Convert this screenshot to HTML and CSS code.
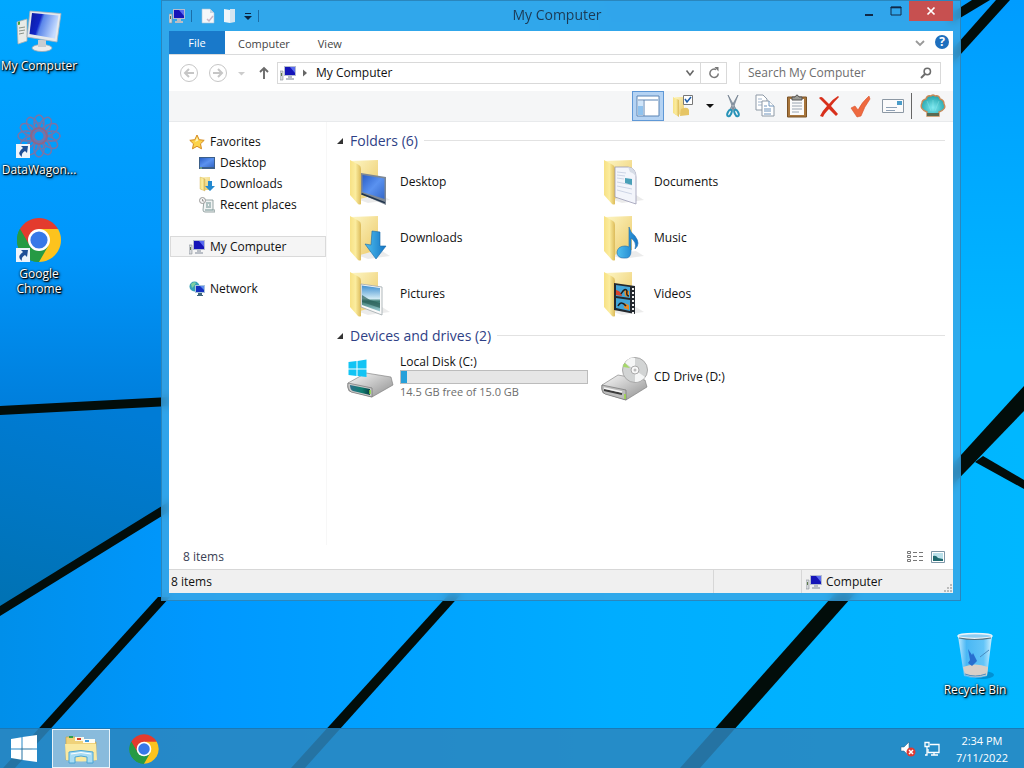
FILE: index.html
```html
<!DOCTYPE html>
<html lang="en">
<head>
    <meta charset="UTF-8">
    <meta name="viewport" content="width=device-width, initial-scale=1.0">
    <title>My Computer</title>
    <link rel="stylesheet" href="styles.css">
</head>
<body>
    <!-- shared icons -->
    <svg class="defs" width="0" height="0" aria-hidden="true">
        <defs>
            <linearGradient id="screen" x1="0" y1="0" x2="1" y2=".3">
                <stop offset="0" stop-color="#0a1a9c"/>
                <stop offset=".4" stop-color="#1026c8"/>
                <stop offset=".5" stop-color="#5a86ea"/>
                <stop offset="1" stop-color="#c5dcff"/>
            </linearGradient>
            <linearGradient id="back" x1="0" y1="0" x2="1" y2="1">
                <stop offset="0" stop-color="#fdf6c4"/>
                <stop offset="1" stop-color="#ecc968"/>
            </linearGradient>
            <linearGradient id="flap" x1="0" y1="0" x2="1" y2="0">
                <stop offset="0" stop-color="#f7e184"/>
                <stop offset=".5" stop-color="#fbec9e"/>
                <stop offset="1" stop-color="#dcbb5a"/>
            </linearGradient>
            <linearGradient id="blue" x1="0" y1="0" x2="1" y2="1">
                <stop offset="0" stop-color="#2a5fc8"/>
                <stop offset=".5" stop-color="#5a92f0"/>
                <stop offset="1" stop-color="#3568c8"/>
            </linearGradient>
            <linearGradient id="arrow" x1="0" y1="0" x2="1" y2="0">
                <stop offset="0" stop-color="#4fc0f0"/>
                <stop offset="1" stop-color="#1474c4"/>
            </linearGradient>
            <linearGradient id="metal" x1="0" y1="0" x2="1" y2="1">
                <stop offset="0" stop-color="#fafafa"/>
                <stop offset="1" stop-color="#8e8e8e"/>
            </linearGradient>
            <linearGradient id="sky" x1="0" y1="0" x2="0" y2="1">
                <stop offset="0" stop-color="#3f8fd0"/>
                <stop offset=".5" stop-color="#cfe9f4"/>
                <stop offset=".6" stop-color="#3b7a70"/>
                <stop offset="1" stop-color="#9fd0d8"/>
            </linearGradient>
            <linearGradient id="glass" x1="0" y1="0" x2="1" y2="0">
                <stop offset="0" stop-color="#d9f1ff" stop-opacity=".9"/>
                <stop offset=".25" stop-color="#5cb8f2" stop-opacity=".8"/>
                <stop offset=".75" stop-color="#7cc8f6" stop-opacity=".8"/>
                <stop offset="1" stop-color="#e6f6ff" stop-opacity=".9"/>
            </linearGradient>
            <linearGradient id="deep" x1="0" y1="0" x2="1" y2="0">
                <stop offset="0" stop-color="#2f6f8a"/>
                <stop offset=".6" stop-color="#0e7e70"/>
                <stop offset="1" stop-color="#0a3e46"/>
            </linearGradient>
            <radialGradient id="shell" cx=".5" cy=".6" r=".6">
                <stop offset="0" stop-color="#7be8f0"/>
                <stop offset="1" stop-color="#1fa0a8"/>
            </radialGradient>
        </defs>
        <symbol id="pc" viewBox="0 0 16 16">
            <path d="M0 6h3v9H0z" fill="#d5d8dc" stroke="#8a9098" stroke-width=".6"/>
            <path d="M1 8h1v3H1z" fill="#5d7a4a"/>
            <path d="M4 1h12v10H4z" fill="#b4bcd0"/>
            <path d="M5 2h10v8H5z" fill="#1515b8"/>
            <path d="M10 2h5v6z" fill="#5a6cf0"/>
            <path d="M8 11h4v2h2v2H6v-2h2z" fill="#b9bec6"/>
        </symbol>
        <symbol id="folder" viewBox="0 0 48 48">
            <path d="M8 40l14 5 22-3-8-5z" fill="#000" opacity=".08"/>
            <path d="M5 3l27-1v34l-18 5z" fill="url(#back)"/>
            <path d="M4 2l9 5q2 1 2 4v35q-1 1-3 0l-8-9z" fill="url(#flap)"/>
        </symbol>
        <symbol id="chrome" viewBox="0 0 48 48">
            <path d="M24 24L4.950 13A22 22 0 0 1 43.050 13z" fill="#e33b2e"/>
            <path d="M24 24L4.950 13A22 22 0 0 0 24 46z" fill="#269a44"/>
            <path d="M24 24L43.050 13A22 22 0 0 1 24 46z" fill="#fcc31e"/>
            <path d="M24 13h19.050L33.500 29.500z" fill="#fcc31e"/>
            <path d="M14.500 29.500L4.950 13 24 13z" fill="#e33b2e"/>
            <path d="M4.950 13l9.550 16.500L24 35l9.500-5.500L24 46A22 22 0 0 1 4.950 13z" fill="#269a44"/>
            <circle cx="24" cy="24" r="11" fill="#fff"/>
            <circle cx="24" cy="24" r="8.600" fill="#3778e8"/>
        </symbol>
        <symbol id="shortcut" viewBox="0 0 14 14">
            <path d="M0 0h14v14H0z" fill="#eef4fb"/>
            <path d="M5 2l7 0-1 7-2-2q-4 2-3 6-6-4 1-9z" fill="#1f4f96"/>
        </symbol>
    </svg>

    <main class="desktop">
        <svg class="wallpaper" viewBox="0 0 1024 768" preserveAspectRatio="none" aria-hidden="true">
            <defs>
                <linearGradient id="top" x1="0" y1="0" x2="0" y2="1">
                    <stop offset="0" stop-color="#00a8ff"/>
                    <stop offset=".6" stop-color="#0097fc"/>
                    <stop offset="1" stop-color="#007edb"/>
                </linearGradient>
                <linearGradient id="low" x1="0" y1="0" x2="1" y2="0">
                    <stop offset="0" stop-color="#008fea"/>
                    <stop offset=".2" stop-color="#0098ff"/>
                    <stop offset=".6" stop-color="#00adff"/>
                    <stop offset="1" stop-color="#00b7ff"/>
                </linearGradient>
                <linearGradient id="dark" x1=".5" y1="0" x2=".3" y2="1">
                    <stop offset="0" stop-color="#007cd6"/>
                    <stop offset="1" stop-color="#0072b4"/>
                </linearGradient>
                <linearGradient id="side" x1="0" y1="0" x2="0" y2="1">
                    <stop offset="0" stop-color="#009cff"/>
                    <stop offset=".8" stop-color="#00b7ff"/>
                </linearGradient>
            </defs>
            <path d="M0 0h1024v768H0z" fill="url(#low)"/>
            <path d="M0 0h600v370L0 410z" fill="url(#top)"/>
            <path d="M0 410l161-9v110L0 611z" fill="url(#dark)"/>
            <path d="M600 0h424v440H600z" fill="url(#side)"/>
            <g fill="#020d0a">
                <path d="M0 406l170-9v9L0 415z"/>
                <path d="M0 606l170-105v10L0 616z"/>
                <path d="M158 597h12L15 768H3z"/>
                <path d="M450 593h12L305 768h-14z"/>
                <path d="M838 590h20L700 768h-20z"/>
                <path d="M1024 386v25L940 498v-20z"/>
                <path d="M983 456l41 24v9l-49-27z"/>
                <path d="M950 14l22-14h18L950 24z"/>
                <path d="M996 0h14L950 66V52z"/>
            </g>
        </svg>

        <nav class="shortcuts" aria-label="Desktop">
            <a class="shortcut" href="#">
                <svg width="48" height="48" viewBox="0 0 48 48">
                    <path d="M2 14l10-3v22L3 36z" fill="#e8ebe8" stroke="#a8b0b0" stroke-width=".8"/>
                    <path d="M4 20l6-1M4 23l6-1M4 26l5-1" stroke="#8a948a"/>
                    <path d="M3 14l2-.6v3l-2 .6z" fill="#4aa23a"/>
                    <ellipse cx="27" cy="40" rx="10" ry="3.500" fill="#ececec" stroke="#a0a8b0" stroke-width=".8"/>
                    <path d="M23 32h8v7h-8z" fill="#c8ccd0"/>
                    <path d="M15 3l31 2.500-4 28.500-30-5z" fill="#e4e9ed" stroke="#a6b0ba" stroke-width=".8"/>
                    <path d="M17 5l26.500 2.500-3.500 23-25.500-4.500z" fill="url(#screen)"/>
                </svg>
                <span>My Computer</span>
            </a>
            <a class="shortcut" href="#">
                <svg width="48" height="48" viewBox="0 0 48 48">
                    <g fill="none" stroke="#86709e" stroke-width="1.500" opacity=".9">
                        <g id="petals">
                            <ellipse cx="24" cy="11" rx="5" ry="8"/><ellipse cx="24" cy="37" rx="5" ry="8"/>
                            <ellipse cx="11" cy="24" rx="8" ry="5"/><ellipse cx="37" cy="24" rx="8" ry="5"/>
                        </g>
                        <use href="#petals" transform="rotate(30 24 24)"/>
                        <use href="#petals" transform="rotate(60 24 24)"/>
                        <circle cx="24" cy="24" r="13" stroke-dasharray="2 2"/>
                        <circle cx="24" cy="24" r="8" stroke="#a0607c" stroke-width="2"/>
                    </g>
                    <use href="#shortcut" x="1" y="32" width="14" height="14"/>
                </svg>
                <span>DataWagon...</span>
            </a>
            <a class="shortcut" href="#">
                <svg width="48" height="48" viewBox="0 0 48 48">
                    <use href="#chrome" width="48" height="48"/>
                    <use href="#shortcut" x="1" y="32" width="14" height="14"/>
                </svg>
                <span>Google Chrome</span>
            </a>
        </nav>

        <a class="shortcut recycle" href="#">
            <svg width="48" height="48" viewBox="0 0 48 48">
                <ellipse cx="31" cy="43" rx="12" ry="4" fill="#004a80" opacity=".35"/>
                <path d="M7 4h34l-5 40q-12 4-23 0z" fill="url(#glass)"/>
                <path d="M12 35q12-5 25 0l-1 8q-11 4-22 0z" fill="#d8cfc8"/>
                <path d="M17 17l4 6 1-2 4 8-5 5-4-3 2-3z" fill="#2060c8" opacity=".85"/>
                <path d="M29 25l9-7M14 42q10 4 21 0" fill="none" stroke="#4a8cc0"/>
                <ellipse cx="24" cy="4" rx="17" ry="2.500" fill="#8fcdf2" stroke="#eaf4fa" stroke-width="1.500"/>
                <path d="M8 6q15 3 32 0" fill="none" stroke="#56707e" stroke-width="1.200"/>
            </svg>
            <span>Recycle Bin</span>
        </a>

        <section class="window">
            <header class="titlebar">
                <div class="quick">
                    <svg width="16" height="16"><use href="#pc"/></svg>
                    <i class="bar"></i>
                    <svg class="gap" width="16" height="16" viewBox="0 0 16 16"><path d="M2 1h8l4 4v10H2z" fill="#f4f7fa" stroke="#a9c4d8" stroke-width=".6"/><path d="M10 1v4h4" fill="#c8d4e0"/><path d="M7 11l2 2 4-5" fill="none" stroke="#c9b5c5" stroke-width="1.500"/></svg>
                    <svg width="16" height="16" viewBox="0 0 16 16"><path d="M2 1l6 1v13l-6-1z" fill="#eef5fa"/><path d="M8 1h5v13l-5 1z" fill="#d3e5f1"/></svg>
                    <svg width="8" height="10" viewBox="0 0 8 10"><path d="M1 2.500h6" stroke="#0b2440"/><path d="M0 5h8L4 9z" fill="#0b2440"/></svg>
                    <i class="bar"></i>
                </div>
                <h1 class="title">My Computer</h1>
                <div class="controls">
                    <button aria-label="Minimize"><svg width="12" height="12" viewBox="0 0 12 12"><path d="M2 9h8v2H2z" fill="#102a48"/></svg></button>
                    <button aria-label="Maximize"><svg width="12" height="12" viewBox="0 0 12 12"><path d="M1 2h10v8H1z" fill="none" stroke="#102a48"/><path d="M1 2h10v1H1z" fill="#102a48" stroke="#102a48" stroke-width=".6"/></svg></button>
                    <button class="close" aria-label="Close"><svg width="10" height="10" viewBox="0 0 10 10"><path d="M1.500 1.500l7 7M8.500 1.500l-7 7" stroke="#fff" stroke-width="1.700"/></svg></button>
                </div>
            </header>

            <div class="client">
                <div class="tabs">
                    <button class="tab file">File</button>
                    <button class="tab">Computer</button>
                    <button class="tab">View</button>
                    <button class="plain push" aria-label="Expand the ribbon"><svg width="10" height="8" viewBox="0 0 10 8"><path d="M1 2l4 4 4-4" fill="none" stroke="#999" stroke-width="1.800"/></svg></button>
                    <button class="help" aria-label="Help">?</button>
                </div>

                <div class="address-row">
                    <button class="plain" aria-label="Back"><svg width="20" height="20" viewBox="0 0 20 20"><g fill="none" stroke="#c6c6c6"><circle cx="10" cy="10" r="8.500"/><path d="M15 10H6M10 6l-4 4 4 4" stroke-width="2"/></g></svg></button>
                    <button class="plain" aria-label="Forward"><svg width="20" height="20" viewBox="0 0 20 20"><g fill="none" stroke="#c6c6c6"><circle cx="10" cy="10" r="8.500"/><path d="M5 10h9M10 6l4 4-4 4" stroke-width="2"/></g></svg></button>
                    <button class="plain" aria-label="Recent locations"><svg width="10" height="10" viewBox="0 0 10 10"><path d="M1 4h7l-3.500 3.500z" fill="#ccc"/></svg></button>
                    <button class="plain up" aria-label="Up"><svg width="12" height="14" viewBox="0 0 12 14"><path d="M6 13V3M2 6l4-4 4 4" fill="none" stroke="#6b6b6b" stroke-width="1.900"/></svg></button>
                    <div class="address">
                        <svg width="16" height="16"><use href="#pc"/></svg>
                        <svg width="8" height="10" viewBox="0 0 8 10"><path d="M2 1.500v7L6 5z" fill="#666"/></svg>
                        <span class="path">My Computer</span>
                        <button class="plain" aria-label="Previous locations"><svg width="10" height="8" viewBox="0 0 10 8"><path d="M1.500 1.500L5 6l3.500-4.500" fill="none" stroke="#666" stroke-width="1.600"/></svg></button>
                        <button class="plain refresh" aria-label="Refresh"><svg width="12" height="12" viewBox="0 0 12 12"><path d="M8 2.500a4.200 4.200 0 1 0 2.300 4" fill="none" stroke="#777" stroke-width="1.500"/><path d="M6.500 0h4v4.500z" fill="#777"/></svg></button>
                    </div>
                    <label class="search">
                        <input type="text" placeholder="Search My Computer" aria-label="Search My Computer">
                        <svg width="12" height="12" viewBox="0 0 12 12"><circle cx="7.300" cy="4.500" r="3.200" fill="none" stroke="#6b6b6b" stroke-width="1.500"/><path d="M5 7l-4 4" stroke="#6b6b6b" stroke-width="2"/></svg>
                    </label>
                </div>

                <div class="toolbar">
                    <button class="tool on" aria-label="Navigation pane"><svg width="24" height="24" viewBox="0 0 24 24"><path d="M1 2h22v20H1z" fill="#fff" stroke="#5a84b4"/><path d="M2 6h20M8 6v16" stroke="#5a84b4"/><path d="M2 7h5v14H2z" fill="#8fc2ee"/><path d="M2 7h5v5H2z" fill="#cfe5fa"/></svg></button>
                    <button class="tool wide" aria-label="Folder options"><svg width="24" height="24" viewBox="0 0 24 24"><path d="M4 3h9v17l-9 1z" fill="url(#back)"/><path d="M2 3l6 3v17l-6-4z" fill="url(#flap)"/><path d="M10 15q7-3 8 1v5l-9 1z" fill="#e6c565"/><path d="M12.500 1.500h9v9h-9z" fill="#fff" stroke="#777"/><path d="M14 5l2 3 4-5" fill="none" stroke="#1f5ca8" stroke-width="1.500"/></svg></button>
                    <button class="tool drop" aria-label="More options"><svg width="8" height="6" viewBox="0 0 8 6"><path d="M0 1h8L4 5z" fill="#111"/></svg></button>
                    <button class="tool" aria-label="Cut"><svg width="24" height="24" viewBox="0 0 24 24"><path d="M7 1l8 14-2 2zM17 1L9 15l2 2z" fill="#98a6b4" stroke="#5f6f80" stroke-width=".6"/><ellipse cx="8.500" cy="19" rx="1.800" ry="3.500" fill="none" stroke="#2793b8" stroke-width="2" transform="rotate(25 8.500 19)"/><ellipse cx="15.500" cy="19" rx="1.800" ry="3.500" fill="none" stroke="#2793b8" stroke-width="2" transform="rotate(-25 15.500 19)"/></svg></button>
                    <button class="tool" aria-label="Copy"><svg width="24" height="24" viewBox="0 0 24 24"><g fill="#fff" stroke="#8d99a6"><path d="M3 1h7l4 4v11H3z"/><path d="M5 5h4M5 8h6M5 11h4" stroke="#9fb4cc"/><path d="M9 7h7l5 5v10H9z"/><path d="M16 7v5h5M11 12h3M11 15h7M11 17h7M11 20h7" stroke="#6f94bc"/></g></svg></button>
                    <button class="tool" aria-label="Paste"><svg width="24" height="24" viewBox="0 0 24 24"><path d="M2.500 3h19v20h-19z" fill="#a8763c" stroke="#7a5226"/><path d="M5 5h14v16H5z" fill="#fbfbfb"/><path d="M7 9h10M7 12h10M7 15h10M7 18h7" stroke="#9aa4b0"/><path d="M7 3h3q2-4 4 0h3v3H7z" fill="#9a9a94" stroke="#555"/></svg></button>
                    <button class="tool" aria-label="Delete"><svg width="24" height="24" viewBox="0 0 24 24"><path d="M2 4q2-2 4 0l6 6q4-5 9-8l1 1q-5 5-8 9l7 8-2 2-7-7q-5 5-6 8l-3-1q3-6 7-10z" fill="#d8301c"/></svg></button>
                    <button class="tool" aria-label="Properties"><svg width="24" height="24" viewBox="0 0 24 24"><path d="M2 14l4-2 3 4q4-8 11-14l1 3q-6 8-9 17l-4 1z" fill="#ee6a40" stroke="#d8532c" stroke-width=".6"/></svg></button>
                    <button class="tool" aria-label="Rename"><svg width="24" height="24" viewBox="0 0 24 24"><path d="M1.500 5.500h21v13h-21z" fill="#fbfbfb" stroke="#8c98a4"/><path d="M16 7h5v4h-5z" fill="#4b9cc8"/><path d="M5 13.500h11M5 16.500h9" stroke="#8ea0b4"/></svg></button>
                    <i class="divider"></i>
                    <button class="tool" aria-label="Classic Explorer settings"><svg width="26" height="24" viewBox="0 0 26 24"><path d="M7 18q-8-3-5-9 0-3 4-4 1-4 5-3 2-2 4 0 4-1 5 3 4 1 4 5 3 5-5 8v4H7z" fill="url(#shell)" stroke="#c78a58" stroke-width="1.400"/><path d="M11 17L7 7M15 17l4-10M13 17V6" stroke="#a6f0f0" stroke-width=".8" opacity=".4"/><path d="M7 19h12v3H7z" fill="#5a6a52"/></svg></button>
                </div>

                <div class="panes">
                    <nav class="tree" aria-label="Navigation">
                        <a href="#"><svg width="16" height="16" viewBox="0 0 16 16"><path d="M8 1l2.200 4.700 5 .6-3.700 3.500 1 5L8 12.300l-4.500 2.500 1-5L.8 6.300l5-.6z" fill="#fcd34a" stroke="#d58a20" stroke-linejoin="round"/><path d="M8 3l1.300 3.500L6 8z" fill="#fff4b8"/></svg>Favorites</a>
                        <a class="sub" href="#"><svg width="16" height="16" viewBox="0 0 16 16"><path d="M0 2h16v12H0z" fill="#3c5f88"/><path d="M1 3h14v9H1z" fill="url(#blue)"/><path d="M1 13h2" stroke="#8fd08a"/></svg>Desktop</a>
                        <a class="sub" href="#"><svg width="16" height="16" viewBox="0 0 16 16"><path d="M2 1h9v13H2z" fill="url(#back)"/><path d="M1 1l5 2v12l-5-2z" fill="url(#flap)" stroke="#cfae50" stroke-width=".4"/><path d="M9 5h4v5h3l-5 5-5-5h3z" fill="#2489d0"/></svg>Downloads</a>
                        <a class="sub" href="#"><svg width="16" height="16" viewBox="0 0 16 16"><path d="M5 3h9v10h2v2H6q-2 0-2-2z" fill="#f0f3f3" stroke="#7f9090" stroke-width=".8"/><path d="M7 6h5M7 8h2M10 8h2M7 10h5M6 13h8" stroke="#6f9090"/><circle cx="3.500" cy="3.500" r="3" fill="#f4f4f4" stroke="#999"/><path d="M3.500 2v2H5" fill="none" stroke="#777" stroke-width=".7"/></svg>Recent places</a>
                        <a class="group selected" href="#"><svg width="16" height="16"><use href="#pc"/></svg>My Computer</a>
                        <a class="group" href="#"><svg width="16" height="16" viewBox="0 0 16 16"><circle cx="5.500" cy="5.500" r="5" fill="#38a0b8"/><path d="M2 3q3-3 5-1L5 5 3 7z" fill="#7fd0a0"/><path d="M6 4h10v8H6z" fill="#a9c4dc"/><path d="M7 5h8v6H7z" fill="#1530c0"/><path d="M11 5h4v4z" fill="#5f8cf0"/><path d="M9 12h4v2h1v1H8v-1h1z" fill="#40667c"/></svg>Network</a>
                    </nav>

                    <div class="files">
                        <h2><svg width="8" height="8" viewBox="0 0 8 8"><path d="M7 1v6H1z" fill="#333"/></svg>Folders (6)</h2>
                        <div class="tiles">
                            <a class="tile" href="#"><svg width="48" height="48" viewBox="0 0 48 48"><use href="#folder"/><path d="M15 15l25 4v28l-25-11z" fill="#7e8894"/><path d="M16.500 17l22 3.500V41l-22-7z" fill="url(#blue)"/><path d="M16 35l23 9v1.500l-24-9z" fill="#20344c"/></svg>Desktop</a>
                            <a class="tile" href="#"><svg width="48" height="48" viewBox="0 0 48 48"><use href="#folder"/><path d="M15 9h13q8 1 8 10v27l-21-7z" fill="#f3f5fb" stroke="#9a9ab4" stroke-width=".8"/><path d="M28 9q8 1 8 10-2-4-6-5z" fill="#d6dce6"/><path d="M17 14l9 1M17 17l8 1M17 20l7 1M17 24l15 3M17 28l15 3M17 32l15 4" stroke="#c3cbdf" stroke-width=".8"/><path d="M25 20l7 1v6l-7-2z" fill="#4aa0b8"/></svg>Documents</a>
                            <a class="tile" href="#"><svg width="48" height="48" viewBox="0 0 48 48"><use href="#folder"/><path d="M26 17l8 1v14l6 0-10 13-11-15 6 1z" fill="url(#arrow)" stroke="#1868a8" stroke-width=".6"/></svg>Downloads</a>
                            <a class="tile" href="#"><svg width="48" height="48" viewBox="0 0 48 48"><use href="#folder"/><path d="M29 13q1 5 6 9 6 8 0 13 2-7-4-11v13q0 8-7 7-7 0-7-6 1-6 8-6 2 0 4 1z" fill="url(#arrow)" stroke="#1c6cae" stroke-width=".6"/></svg>Music</a>
                            <a class="tile" href="#"><svg width="48" height="48" viewBox="0 0 48 48"><use href="#folder"/><path d="M15 14l21 3v28l-21-8z" fill="#fafafa" stroke="#a0a8ac" stroke-width=".8"/><path d="M16 15.500l18 2.500v23.500L16 35z" fill="url(#sky)"/><path d="M16 25l8 5 10 3v5l-18-6z" fill="#2b5f58" opacity=".7"/></svg>Pictures</a>
                            <a class="tile" href="#"><svg width="48" height="48" viewBox="0 0 48 48"><use href="#folder"/><path d="M14 13l21 3v28l-21-4z" fill="#23282e"/><path d="M16 15l14 2v11l-14-2zM16 28l14 2v11l-14-3z" fill="#43a6d8"/><path d="M16 20v5l6 1q-1-5-6-6z" fill="#d8442c"/><path d="M24 20l5 1v6l-4-1zM24 33l5 2v5l-5-2z" fill="#e58a28"/><path d="M21 24q4-7 6-3-1 5 2 5M18 36q3-6 8 0" fill="none" stroke="#1c2024" stroke-width="1.500"/><path d="M33 18v26" stroke="#f0f0f0" stroke-width="2" stroke-dasharray="2 2"/></svg>Videos</a>
                        </div>
                        <h2><svg width="8" height="8" viewBox="0 0 8 8"><path d="M7 1v6H1z" fill="#333"/></svg>Devices and drives (2)</h2>
                        <div class="tiles">
                            <a class="tile" href="#">
                                <svg width="48" height="48" viewBox="0 0 48 48"><path d="M2 30L20 20l25 4 2 8-21 12L3 38q-2-4-1-8z" fill="url(#metal)" stroke="#777" stroke-width=".6"/><path d="M2 30l24 5v9L5 39q-4-3-3-9z" fill="#c9c9c9" stroke="#666" stroke-width=".6"/><path d="M4 32l20 4v6L7 38q-3-1-3-6z" fill="url(#deep)"/><path d="M24 37v4" stroke="#8adf3c" stroke-width="1.500"/><path d="M2.500 9l8-1v7.500h-8zM11.500 8l9-1.500v9h-9zM2.500 16.500h8V23l-8-1zM11.500 16.500h9V24l-9-1z" fill="#12c4f4"/></svg>
                                <span class="drive">
                                    <span>Local Disk (C:)</span>
                                    <progress value="0.5" max="15" aria-label="Space used on Local Disk (C:)"></progress>
                                    <small>14.5 GB free of 15.0 GB</small>
                                </span>
                            </a>
                            <a class="tile" href="#"><svg width="48" height="48" viewBox="0 0 48 48"><path d="M2 32L18 22l27 5 2 7-21 13L3 40q-2-4-1-8z" fill="url(#metal)" stroke="#777" stroke-width=".6"/><path d="M2 32l24 5v10L5 41q-4-3-3-9z" fill="#bdbdbd" stroke="#666" stroke-width=".6"/><path d="M4 37l18 4" stroke="#3c3c3c" stroke-width="2"/><path d="M4 35l18 4" stroke="#f5f5f5" stroke-width="1.500"/><path d="M25 41v5" stroke="#9ada3c" stroke-width="1.500"/><circle cx="35" cy="17" r="12.500" fill="#d2d4d4" stroke="#a8a8a8"/><path d="M35 17L25 10q4-6 10-5zM35 17l10 7q-4 5-10 5z" fill="#f5f6f6"/><path d="M30 15l-7-1q0-3 2-4z" fill="#a6d86a"/><circle cx="35" cy="17" r="4" fill="#f8f8f8" stroke="#aaa"/><circle cx="35" cy="17" r="1.500" fill="#bbb"/></svg>CD Drive (D:)</a>
                        </div>
                    </div>
                </div>

                <div class="details">
                    <span>8 items</span>
                    <button class="plain push" aria-label="Details view"><svg width="16" height="14" viewBox="0 0 16 14"><g fill="none" stroke="#777"><path d="M.5 1.500h3v2h-3zM.5 5.500h3v2h-3zM.5 9.500h3v2h-3z"/><path d="M6 2.500h4M12 2.500h4M6 6.500h4M12 6.500h4M6 10.500h4M12 10.500h4"/></g></svg></button>
                    <button class="plain" aria-label="Large icons view"><svg width="14" height="14" viewBox="0 0 14 14"><path d="M.5 1.500h13v11H.5z" fill="#fff" stroke="#7d97a8"/><path d="M2 3h10v8H2z" fill="#b9e0ea"/><path d="M2 6q3-1 5 2l5 1v2H2z" fill="#1f6a70"/></svg></button>
                </div>

                <footer class="status">
                    <span class="count">8 items</span>
                    <span class="empty"></span>
                    <span class="zone"><svg width="16" height="16"><use href="#pc"/></svg>Computer</span>
                    <svg class="grip" width="10" height="10" viewBox="0 0 10 10"><path d="M7 1h2v2H7zM4 4h2v2H4zM7 4h2v2H7zM1 7h2v2H1zM4 7h2v2H4zM7 7h2v2H7z" fill="#bbb"/></svg>
                </footer>
            </div>
        </section>
    </main>

    <footer class="taskbar">
        <button class="start" aria-label="Start"><svg width="28" height="28" viewBox="0 0 28 28"><path d="M1 4l10.500-1.700v11.200H1zM12.500 2.100L27 0v13.500H12.500zM1 14.500h10.500v10.200L1 23zM12.500 14.500H27V27l-14.500-2.100z" fill="#fff"/></svg></button>
        <button class="app active" aria-label="File Explorer"><svg width="34" height="32" viewBox="0 0 34 32"><path d="M2 4h9l2 3h6l2 2h11v18H2z" fill="#efd27a" stroke="#c69f42" stroke-width=".6"/><path d="M5 3h4v2H5z" fill="#2ea04c"/><path d="M11 4h9v4h-9z" fill="#fbf8ea"/><path d="M13 5h4v2h-4z" fill="#d4402c"/><path d="M19 6h12v4H19z" fill="#fdfdf4"/><path d="M21 7h4v2h-4z" fill="#3c9ce0"/><path d="M1 11h31l1 16q-16 3-31 0z" fill="#fae9a0"/><path d="M5 30V19q12-3 24 0v11h-6v-6q-6-2-12 0v6z" fill="#a8dcf4" stroke="#4aa4d4"/><path d="M7 21q10-3 20 0" fill="none" stroke="#fff"/></svg></button>
        <button class="app" aria-label="Google Chrome"><svg width="32" height="32"><use href="#chrome"/></svg></button>
        <div class="tray">
            <svg width="16" height="16" viewBox="0 0 16 16"><path d="M1 6h3l5-5v14l-5-5H1z" fill="#fff" stroke="#2a5a80" stroke-width=".5"/><circle cx="11" cy="11" r="4.500" fill="#dd3a34"/><path d="M9 9l4 4M13 9l-4 4" stroke="#fff" stroke-width="1.500"/></svg>
            <svg width="16" height="16" viewBox="0 0 16 16"><g fill="none" stroke="#fff" stroke-width="1.300"><path d="M6 3.500h9v8H4V8M7 14h7M10 12v2"/><path d="M1 1.500h4v4H1zM3 6v8H1"/></g></svg>
            <time class="clock" datetime="2022-07-11T14:34">2:34 PM<br>7/11/2022</time>
        </div>
    </footer>
</body>
</html>
```
FILE: styles.css
```css
*{
    box-sizing: border-box;
}
body{
    margin: 0;
    min-height: 100vh;
    display: flex;
    flex-direction: column;
    position: relative;
    overflow: hidden;
    background-color: #00a0ff;
    font: 12px/16px "Open Sans", "Noto Sans", sans-serif;
    color: #111;
}
button{
    font: inherit;
    color: inherit;
    border: 0;
    padding: 0;
    background: none;
}
a{
    color: inherit;
    text-decoration: none;
}
svg{
    display: block;
    flex: none;
}
.defs{
    position: absolute;
}

/* desktop */
.desktop{
    flex: 1;
}
.wallpaper{
    position: absolute;
    top: 0;
    left: 0;
    width: 100%;
    height: 100%;
}
.shortcuts{
    position: absolute;
    top: 8px;
    left: 0;
    display: grid;
    grid-auto-rows: 104px;
}
.shortcut{
    width: 78px;
    display: flex;
    flex-direction: column;
    align-items: center;
    gap: 2px;
    line-height: 15px;
    text-align: center;
    color: #fff;
    text-shadow: 1px 1px 1px #000, 1px 1px 3px #000, 0 0 2px #000;
}
.recycle{
    position: absolute;
    right: 10px;
    bottom: 71px;
}

/* window */
.window{
    position: absolute;
    top: 0;
    left: 161px;
    right: 63px;
    bottom: 167px;
    display: flex;
    flex-direction: column;
    padding: 0 7px 7px;
    background-color: rgba(60, 168, 230, .8);
    border: 1px solid #2a86bd;
    backdrop-filter: blur(4px);
}
.titlebar{
    display: grid;
    grid-template-columns: 1fr auto 1fr;
    height: 30px;
}
.quick{
    display: flex;
    align-items: center;
    gap: 6px;
}
.quick .gap{
    margin-left: 2px;
}
.bar{
    width: 1px;
    height: 12px;
    background-color: #1b6ea8;
}
.title{
    margin: 0;
    padding-right: 8px;
    font-size: 14px;
    line-height: 28px;
    font-weight: 400;
    color: #1c3a55;
}
.controls{
    display: flex;
    justify-content: flex-end;
    align-items: flex-start;
}
.controls button{
    width: 27px;
    height: 20px;
    display: grid;
    place-items: center;
}
.controls .close{
    width: 44px;
    background-color: #c75050;
}
.client{
    flex: 1;
    display: flex;
    flex-direction: column;
    background-color: #fff;
}
.plain{
    display: grid;
    place-items: center;
}
.push{
    margin-left: auto;
}

/* ribbon tabs */
.tabs{
    display: flex;
    height: 24px;
    padding-right: 4px;
    border-bottom: 1px solid #dadbdc;
    color: #444;
}
.tab{
    padding: 2px 13px 0;
    margin-right: 2px;
    font-size: 11px;
}
.tab.file{
    width: 56px;
    margin-right: 0;
    padding-top: 0;
    background-color: #1979ca;
    color: #fff;
}
.help{
    width: 14px;
    height: 14px;
    margin: 4px 0 0 10px;
    border-radius: 50%;
    background-color: #1e6fbe;
    color: #fff;
    font-weight: 700;
    line-height: 14px;
}

/* address bar */
.address-row{
    display: flex;
    align-items: center;
    gap: 9px;
    height: 36px;
    padding: 0 12px 0 10px;
}
.up{
    margin-left: 2px;
}
.address{
    flex: 1;
    display: flex;
    align-items: center;
    height: 22px;
    gap: 5px;
    margin-left: -2px;
    padding-left: 2px;
    border: 1px solid #d9d9d9;
}
.path{
    flex: 1;
    padding-left: 2px;
}
.refresh{
    width: 26px;
    height: 20px;
    border-left: 1px solid #d9d9d9;
}
.search{
    width: 202px;
    height: 22px;
    margin-left: 3px;
    display: flex;
    align-items: center;
    padding: 0 8px;
    border: 1px solid #d9d9d9;
}
.search input{
    flex: 1;
    min-width: 0;
    border: 0;
    padding: 0;
    outline: 0;
    font: inherit;
}
.search input::placeholder{
    color: #6d6d6d;
}

/* toolbar */
.toolbar{
    display: flex;
    justify-content: flex-end;
    height: 31px;
    padding-right: 4px;
    background-color: #f5f6f7;
    border-bottom: 1px solid #e8eaec;
}
.tool{
    width: 32px;
    display: grid;
    place-items: center;
}
.tool.on{
    background-color: #b5d3f3;
    border: 1px solid #5f98d6;
}
.tool.wide{
    width: 38px;
}
.tool.drop{
    width: 15px;
}
.divider{
    width: 1px;
    height: 26px;
    margin: 2px 5px 0 2px;
    background-color: #666;
}

/* navigation tree and files */
.panes{
    flex: 1;
    display: flex;
}
.tree{
    width: 158px;
    padding: 9px 0 0 1px;
    border-right: 1px solid #f7f7f7;
}
.tree a{
    display: flex;
    align-items: center;
    gap: 5px;
    height: 21px;
    padding-left: 19px;
}
.tree .sub{
    padding-left: 29px;
}
.tree .group{
    margin-top: 21px;
}
.tree .selected{
    padding-left: 18px;
    background-color: #f5f5f5;
    border: 1px solid #dadada;
}
.files{
    flex: 1;
    padding: 5px 8px 0 9px;
}
.files h2{
    display: flex;
    align-items: center;
    gap: 6px;
    height: 27px;
    margin: 0;
    font-size: 14px;
    font-weight: 400;
    color: #2f3f86;
}
.files h2::after{
    content: "";
    flex: 1;
    height: 1px;
    background-color: #e2e2e2;
}
.tiles{
    display: grid;
    grid-template-columns: repeat(auto-fill, 254px);
    padding-left: 10px;
}
.tile{
    display: flex;
    align-items: center;
    gap: 6px;
    height: 56px;
}
.drive{
    display: flex;
    flex-direction: column;
    width: 188px;
}
.drive progress{
    appearance: none;
    width: 100%;
    height: 14px;
    border: 1px solid #bcbcbc;
}
.drive progress::-webkit-progress-bar{
    background-color: #e6e6e6;
}
.drive progress::-webkit-progress-value{
    background-color: #26a0da;
}
.drive small{
    font-size: 11px;
    color: #6d6d6d;
}

/* bottom bars */
.details{
    display: flex;
    align-items: center;
    gap: 8px;
    height: 24px;
    padding: 0 8px 0 14px;
    color: #3a3f55;
}
.status{
    display: flex;
    height: 24px;
    line-height: 23px;
    background-color: #f0f0f0;
    border-top: 1px solid #d7d7d7;
}
.count{
    flex: 1;
    padding-left: 2px;
}
.empty, .zone{
    border-left: 1px solid #d7d7d7;
}
.empty{
    width: 88px;
}
.zone{
    width: 142px;
    display: flex;
    align-items: center;
    gap: 4px;
    padding-left: 4px;
}
.grip{
    align-self: flex-end;
}

/* taskbar */
.taskbar{
    position: relative;
    display: flex;
    height: 40px;
    background-color: rgba(44, 134, 190, .85);
    border-top: 1px solid rgba(20, 110, 170, .6);
    color: #fff;
}
.start{
    width: 48px;
    margin-right: 4px;
    display: grid;
    place-items: center;
}
.app{
    width: 58px;
    margin-right: 5px;
    display: grid;
    place-items: center;
}
.app.active{
    background-color: rgba(190, 215, 232, .65);
    border: 1px solid #e8f3fa;
}
.tray{
    margin-left: auto;
    display: flex;
    align-items: center;
    gap: 8px;
    padding-right: 16px;
}
.clock{
    padding-left: 8px;
    font-size: 11px;
    line-height: 17px;
    text-align: center;
}
```
